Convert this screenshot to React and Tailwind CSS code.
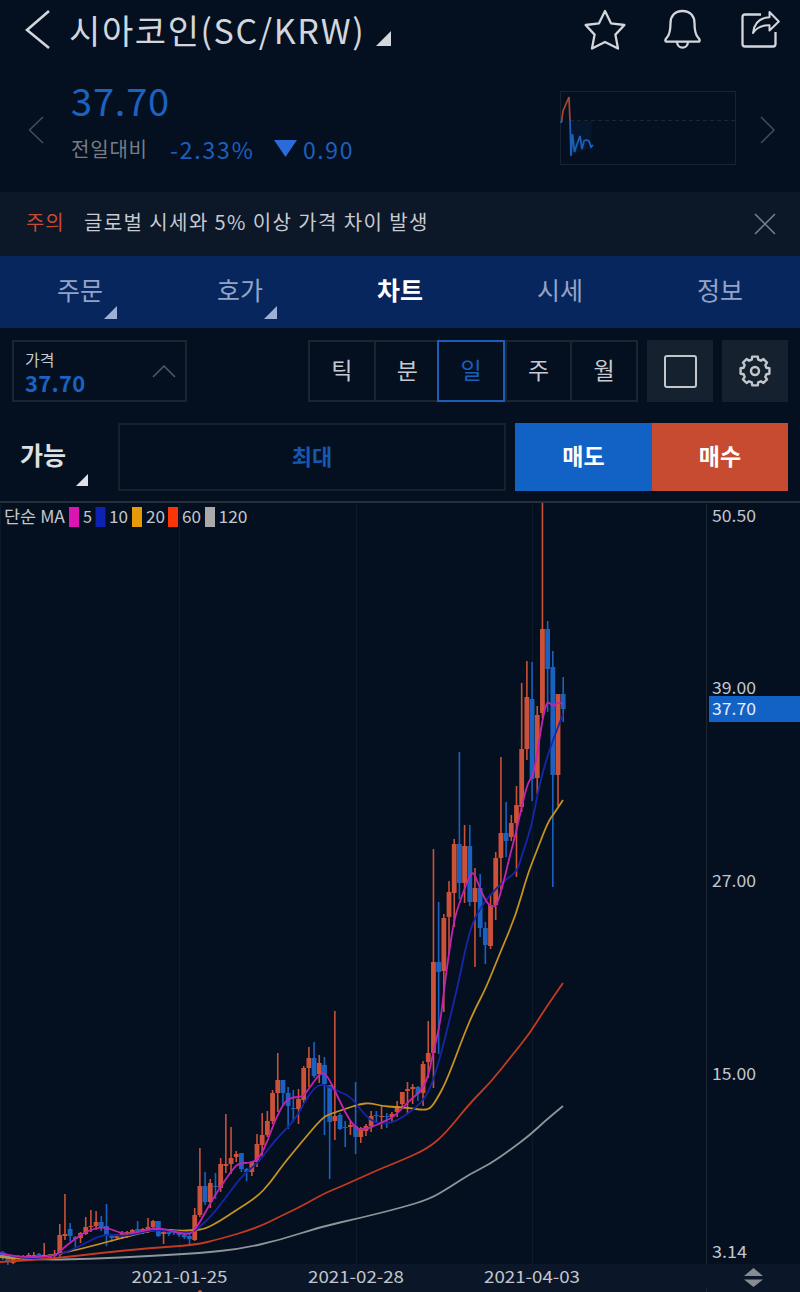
import { useState } from 'react';

const TABS = [
  { label: '주문', menu: true },
  { label: '호가', menu: true },
  { label: '차트' },
  { label: '시세' },
  { label: '정보' },
];

const PERIODS = ['틱', '분', '일', '주', '월'];

// Chart geometry, in px. The plot starts at TOP on the price scale
const TOP = 503;
const LAST_X = 563.2;
const STEP = 5.19;
const UP = '#cb5138';
const DOWN = '#1b61c0';

// Newest first: [up, high, body top, body bottom, low]
const CANDLES = [
  [0, 677, 694, 709, 722], [1, 694, 694, 775, 806], [0, 651, 667, 775, 887], [0, 621, 629, 669, 712],
  [1, 503, 629, 713, 718], [1, 706, 715, 778, 794], [0, 662, 699, 779, 801], [1, 661, 697, 749, 760],
  [1, 683, 749, 807, 812], [1, 786, 805, 823, 877], [1, 815, 823, 837, 841], [0, 802, 833, 841, 857],
  [1, 757, 833, 858, 890], [1, 852, 858, 905, 920], [1, 894, 905, 946, 949], [0, 922, 928, 945, 964],
  [0, 874, 888, 928, 937], [1, 868, 888, 902, 967], [0, 825, 846, 902, 906], [1, 825, 846, 883, 903],
  [0, 752, 844, 883, 899], [1, 839, 844, 893, 927], [1, 881, 892, 917, 955], [1, 914, 918, 971, 1012],
  [0, 902, 962, 972, 1054], [1, 849, 962, 1053, 1088], [1, 1021, 1053, 1062, 1078], [1, 1061, 1064, 1093, 1106],
  [0, 1086, 1087, 1094, 1101], [1, 1084, 1087, 1089, 1104], [1, 1082, 1089, 1091, 1114], [1, 1092, 1092, 1104, 1107],
  [1, 1101, 1106, 1112, 1117], [1, 1112, 1114, 1117, 1122], [0, 1113, 1116, 1117, 1128], [1, 1106, 1116, 1117, 1129],
  [0, 1111, 1115, 1116, 1123], [1, 1111, 1116, 1126, 1132], [1, 1124, 1126, 1131, 1136], [1, 1127, 1128, 1137, 1143],
  [0, 1082, 1126, 1137, 1154], [1, 1121, 1125, 1127, 1135], [0, 1121, 1127, 1128, 1147], [0, 1113, 1115, 1129, 1130],
  [1, 1011, 1116, 1121, 1140], [0, 1085, 1085, 1122, 1179], [0, 1057, 1065, 1084, 1135], [1, 1055, 1063, 1074, 1083],
  [0, 1042, 1058, 1076, 1078], [1, 1047, 1058, 1068, 1087], [1, 1066, 1068, 1100, 1103], [1, 1089, 1099, 1109, 1124],
  [0, 1090, 1108, 1109, 1122], [0, 1087, 1093, 1106, 1129], [0, 1080, 1080, 1093, 1105], [1, 1053, 1080, 1093, 1112],
  [1, 1090, 1093, 1121, 1124], [1, 1111, 1121, 1135, 1137], [1, 1113, 1135, 1145, 1157], [1, 1134, 1144, 1162, 1167],
  [1, 1161, 1162, 1172, 1176], [0, 1168, 1169, 1172, 1181], [0, 1153, 1153, 1169, 1172], [1, 1151, 1154, 1157, 1162],
  [1, 1127, 1158, 1164, 1174], [1, 1114, 1164, 1166, 1173], [1, 1158, 1164, 1188, 1192], [0, 1173, 1186, 1187, 1199],
  [1, 1179, 1183, 1202, 1208], [0, 1172, 1186, 1202, 1205], [1, 1148, 1186, 1215, 1217], [1, 1208, 1215, 1240, 1241],
  [0, 1234, 1236, 1239, 1244], [0, 1234, 1235, 1237, 1239], [0, 1232, 1233, 1235, 1237], [0, 1230, 1231, 1233, 1235],
  [0, 1230, 1232, 1234, 1236], [1, 1230, 1232, 1234, 1244], [0, 1221, 1221, 1236, 1237], [1, 1220, 1221, 1227, 1229],
  [1, 1218, 1227, 1231, 1233], [1, 1228, 1229, 1233, 1234], [0, 1221, 1229, 1233, 1235], [1, 1229, 1230, 1233, 1236],
  [1, 1231, 1232, 1234, 1238], [1, 1231, 1233, 1235, 1239], [1, 1234, 1236, 1238, 1240], [0, 1234, 1236, 1238, 1242],
  [0, 1204, 1226, 1236, 1246], [0, 1216, 1222, 1227, 1231], [1, 1211, 1222, 1226, 1230], [1, 1210, 1226, 1227, 1232],
  [1, 1217, 1227, 1234, 1235], [1, 1232, 1233, 1238, 1243], [0, 1236, 1237, 1239, 1247], [0, 1223, 1229, 1236, 1241],
  [1, 1194, 1234, 1236, 1240], [1, 1224, 1235, 1255, 1257], [1, 1250, 1254, 1256, 1260], [0, 1254, 1255, 1258, 1259],
  [1, 1243, 1255, 1257, 1259], [0, 1253, 1254, 1258, 1260], [1, 1252, 1255, 1257, 1259], [1, 1253, 1255, 1257, 1259],
  [1, 1255, 1256, 1258, 1260], [0, 1255, 1256, 1259, 1260], [1, 1256, 1257, 1263, 1264], [0, 1254, 1255, 1262, 1265],
  [0, 1251, 1252, 1258, 1260],
];

const AVERAGES = [
  {
    color: '#8f9599',
    points: [[0, 1256], [30, 1260], [90, 1259], [150, 1256], [200, 1253], [240, 1249], [280, 1240], [320, 1227], [360, 1218], [400, 1208], [430, 1199], [450, 1187], [470, 1174], [490, 1164], [510, 1150], [530, 1135], [545, 1121], [563, 1106]],
  },
  {
    color: '#c43a20',
    points: [[0, 1262], [50, 1259], [100, 1253], [150, 1248], [195, 1245], [220, 1239], [257, 1228], [285, 1214], [300, 1207], [325, 1193], [340, 1187], [360, 1178], [380, 1169], [400, 1161], [427, 1149], [445, 1134], [470, 1103], [490, 1083], [510, 1058], [530, 1033], [545, 1009], [563, 983]],
  },
  {
    color: '#c8921e',
    points: [[0, 1257], [20, 1260], [60, 1254], [100, 1244], [140, 1233], [160, 1229], [180, 1231], [195, 1230], [205, 1229], [220, 1221], [235, 1211], [257, 1197], [270, 1183], [282, 1166], [300, 1144], [322, 1118], [330, 1114], [345, 1109], [360, 1104], [370, 1103], [382, 1106], [395, 1107], [410, 1108], [422, 1110], [430, 1109], [437, 1099], [447, 1080], [465, 1032], [475, 1009], [486, 988], [500, 953], [516, 915], [527, 876], [537, 850], [548, 822], [553, 815], [563, 800]],
  },
  {
    color: '#1626a8',
    points: [[0, 1252], [20, 1260], [60, 1255], [80, 1246], [105, 1233], [125, 1237], [150, 1230], [175, 1231], [190, 1234], [200, 1227], [215, 1212], [235, 1185], [245, 1173], [258, 1163], [275, 1140], [295, 1120], [305, 1101], [315, 1087], [323, 1084], [335, 1090], [350, 1096], [360, 1109], [370, 1120], [380, 1124], [395, 1122], [410, 1112], [420, 1104], [430, 1090], [440, 1058], [450, 1018], [460, 976], [465, 950], [473, 921], [485, 901], [495, 890], [505, 880], [517, 872], [522, 855], [532, 825], [538, 790], [548, 754], [555, 735], [563, 714]],
  },
  {
    color: '#c423b0',
    points: [[0, 1253], [15, 1257], [55, 1257], [62, 1249], [75, 1239], [85, 1232], [103, 1226], [120, 1233], [130, 1234], [150, 1229], [160, 1228], [175, 1232], [190, 1235], [197, 1227], [205, 1213], [215, 1195], [230, 1173], [238, 1163], [252, 1163], [260, 1157], [268, 1140], [275, 1120], [285, 1101], [293, 1097], [303, 1097], [310, 1087], [321, 1072], [327, 1075], [337, 1095], [345, 1112], [353, 1125], [360, 1130], [370, 1128], [385, 1121], [395, 1116], [410, 1100], [420, 1092], [428, 1078], [433, 1053], [440, 1025], [444, 990], [448, 960], [454, 920], [461, 898], [470, 875], [474, 872], [480, 889], [488, 905], [496, 908], [503, 885], [510, 855], [516, 833], [522, 805], [528, 782], [533, 776], [537, 755], [542, 722], [547, 700], [553, 707], [558, 702], [563, 704]],
  },
];

const LEGEND = [
  { color: '#dc14b4', x: 69, text: '5', textX: 83, width: 9 },
  { color: '#0d22b0', x: 95.5, text: '10', textX: 109, width: 19 },
  { color: '#e59a08', x: 132, text: '20', textX: 146, width: 19 },
  { color: '#fb3507', x: 168, text: '60', textX: 182, width: 19 },
  { color: '#a9a9a9', x: 205, text: '120', textX: 218.5, width: 29 },
];

const PRICES = [
  { y: 516, text: '50.50' },
  { y: 688, text: '39.00' },
  { y: 881, text: '27.00' },
  { y: 1074, text: '15.00' },
];

const DATES = [
  { x: 179.5, text: '2021-01-25' },
  { x: 356, text: '2021-02-28' },
  { x: 532, text: '2021-04-03' },
];

// Smooth line through the midpoints of neighbouring points
function linePath(points) {
  let d = `M${points[0][0]} ${points[0][1]}`;
  for (let i = 1; i < points.length - 1; i++) {
    const [x, y] = points[i];
    const [nx, ny] = points[i + 1];
    d += ` Q${x} ${y} ${(x + nx) / 2} ${(y + ny) / 2}`;
  }
  const [lx, ly] = points[points.length - 1];
  return `${d} L${lx} ${ly}`;
}

function Chevron({ d, className, strokeWidth = 1.5, ...size }) {
  return (
    <svg {...size} className={className} fill="none" stroke="currentColor" strokeWidth={strokeWidth}>
      <path d={d} />
    </svg>
  );
}

function Corner({ size, className }) {
  return (
    <svg width={size} height={size} viewBox="0 0 10 10" className={className} fill="currentColor">
      <path d="M10 0V10H0Z" />
    </svg>
  );
}

function Header() {
  return (
    <header className="flex h-16 items-center pb-1 pl-[25px] pr-5 text-[#d3d6dc]">
      <Chevron width={26} height={40} d="M24 1L2 20L24 38" strokeWidth={2.6} />
      <h1 className="ml-[18px] w-[297px] whitespace-nowrap text-[34px] leading-[56px] tracking-[1.6px]">시아코인(SC/KRW)</h1>
      <Corner size={15} className="mt-[17px] ml-[10px]" />
      <div className="ml-auto flex items-center gap-[39px]">
        {/* Favourite */}
        <svg width="42" height="42" className="overflow-visible" fill="none" stroke="currentColor" strokeWidth="2.3" strokeLinejoin="round">
          <path d="M23 2L29 14.3L42.4 16L33.4 25.6L36 39.5L23 33L10 39.5L12.6 25.6L3.6 16L17 14.3Z" />
        </svg>
        {/* Alarm */}
        <svg width="38" height="42" fill="none" stroke="currentColor" strokeWidth="2.3" strokeLinejoin="round">
          <path d="M19.5 2C11.5 2 7.5 7.5 7.5 14C7.5 23 6.3 26 3.9 28.5C2 30.5 1.5 32.6 4 32.6H35C37.5 32.6 37 30.5 35.1 28.5C32.7 26 31.5 23 31.5 14C31.5 7.5 27.5 2 19.5 2Z" />
          <path d="M14 33C14.5 40.5 24.5 40.5 25 33" />
        </svg>
        {/* Share */}
        <svg width="40" height="40" className="overflow-visible" fill="none" stroke="currentColor" strokeWidth="2.3" strokeLinejoin="round">
          <path d="M21 4.5H5Q2.5 4.5 2.5 7V34Q2.5 36.5 5 36.5H33Q35.5 36.5 35.5 34V22" />
          <path d="M29.5 2L38.8 11.5L29.5 20.5V15.3C21.5 15 16.5 17.5 13 23C14 13.5 20 7.8 29.5 7.2Z" strokeWidth="2" />
        </svg>
      </div>
    </header>
  );
}

function PriceSummary() {
  return (
    <section className="flex h-32 items-center pl-7 pr-6">
      <Chevron width={16} height={28} d="M15 1L1.5 14L15 27" className="mb-[-4px] text-[#454d58]" />
      <div className="ml-[27px] w-[300px]">
        <div className="-mt-3 w-[98px] text-[38px] leading-[40px] tracking-[0.8px] text-[#1b62c2]">37.70</div>
        <div className="mt-[13px] flex h-8 items-center whitespace-nowrap text-[22px] leading-8 text-[#1d5fbd]">
          <span className="w-[99px] text-[20px] tracking-[0.8px] text-[#777d86]">전일대비</span>
          <span className="w-[104px] text-[23px] tracking-[1.8px]">-2.33%</span>
          <svg width="23" height="17" className="mr-[6px]" fill="#2a6bd8">
            <path d="M0 0H23L11.5 17Z" />
          </svg>
          <span className="text-[23px] tracking-[1.6px]">0.90</span>
        </div>
      </div>
      <svg width="176" height="76" className="ml-auto mr-[24px]" fill="none">
        <rect x="0.5" y="1.5" width="175" height="73" stroke="#172330" />
        <path d="M10 30.5H176" stroke="#1a2733" strokeDasharray="4 3" />
        <path d="M10 31H32L31 58L20 62L11 66Z" fill="#06162d" />
        <path d="M1.5 32L3 21L9 7L10 31" stroke="#a94633" strokeWidth="1.7" />
        <path d="M1 33L2 30M10 30L11 66L12.5 44L14.5 62L16 57L20 46L22 59L24 51L26 50L29 51L31 57L33 55" stroke="#1b5fb8" strokeWidth="1.8" />
      </svg>
      <Chevron width={16} height={28} d="M1 1L14 14L1 27" className="mb-[-4px] text-[#454d58]" />
    </section>
  );
}

function Notice({ onClose }) {
  return (
    <section className="flex h-16 items-center bg-[#0c1728] pb-1 pl-[26px] pr-6 text-[20px]">
      <span className="w-[58px] tracking-[0.8px] text-[#c94a33]">주의</span>
      <span className="whitespace-nowrap tracking-[1.4px] text-[#c6cad1]">글로벌 시세와 5% 이상 가격 차이 발생</span>
      <button onClick={onClose} className="ml-auto cursor-pointer text-[#7b828c]" aria-label="닫기">
        <Chevron width={22} height={22} d="M1 1L21 21M21 1L1 21" className="mt-1" />
      </button>
    </section>
  );
}

function Tabs() {
  const [active, setActive] = useState('차트');
  return (
    <nav className="grid h-[72px] grid-cols-5 bg-[#07265d]">
      {TABS.map((tab) => (
        <button
          key={tab.label}
          onClick={() => setActive(tab.label)}
          className={`relative cursor-pointer pb-1 text-[25px] ${active === tab.label ? 'font-bold text-white' : 'text-[#93a3c8]'}`}
        >
          {tab.label}
          {tab.menu && <Corner size={13} className="absolute left-[104px] top-[50px] text-[#9dafd4]" />}
        </button>
      ))}
    </nav>
  );
}

function Toolbar() {
  const [period, setPeriod] = useState('일');
  return (
    <section className="flex h-[85px] px-3 pt-3">
      <div className="flex h-[62px] w-[175px] items-center justify-between border-2 border-[#1b2530] pl-[11px] pr-[9px]">
        <div>
          <div className="text-[16px] leading-[22px] text-[#c6cad1]">가격</div>
          <div className="text-[22px] font-bold leading-[24px] tracking-[0.3px] text-[#1b62c2]">37.70</div>
        </div>
        <Chevron width={24} height={14} d="M1 13L12 2L23 13" className="text-[#525a65]" />
      </div>
      <div className="ml-auto flex h-[62px] w-[330px] border-2 border-[#1b2530]">
        {PERIODS.map((item) => (
          <button
            key={item}
            onClick={() => setPeriod(item)}
            className={`flex-1 cursor-pointer pb-[3px] text-[23px] ${
              item === period
                ? '-my-[2px] -ml-[2px] border-[2.5px] border-[#1c5dba] text-[#1b5fbd]'
                : 'text-[#c6cad1] not-first:border-l-2 not-first:border-[#1b2530]'
            }`}
          >
            {item}
          </button>
        ))}
      </div>
      <button className="ml-[9px] flex h-[62px] w-[66px] cursor-pointer items-center justify-center bg-[#162130]">
        <span className="block h-[33px] w-[33px] rounded-[3px] border-[2.5px] border-[#c3c6cb]" />
      </button>
      <button className="ml-[9px] flex h-[62px] w-[66px] cursor-pointer items-center justify-center bg-[#162130]">
        <svg width="34" height="34" viewBox="-17 -17 34 34" fill="none" stroke="#c3c6cb" strokeWidth="2.4" strokeLinejoin="round">
          <circle r="4" />
          <path d="M-3.2 -11.4L-2.8 -14.4H2.8L3.2 -11.4L5.9 -10.3L8.4 -12L12 -8.4L10.3 -5.9L11.4 -3.2L14.4 -2.8V2.8L11.4 3.2L10.3 5.9L12 8.4L8.4 12L5.9 10.3L3.2 11.4L2.8 14.4H-2.8L-3.2 11.4L-5.9 10.3L-8.4 12L-12 8.4L-10.3 5.9L-11.4 3.2L-14.4 2.8V-2.8L-11.4 -3.2L-10.3 -5.9L-12 -8.4L-8.4 -12L-5.9 -10.3Z" />
        </svg>
      </button>
    </section>
  );
}

function OrderBar() {
  return (
    <section className="flex h-[88px] pl-5 pr-3 pt-[10px] text-[23px] font-bold">
      <div className="flex h-[68px] w-[98px] items-center pb-1 text-[25px] text-[#dde0e4]">
        <span className="w-[56px]">가능</span>
        <Corner size={12} className="mt-[50px]" />
      </div>
      <div className="flex h-[68px] w-[388px] items-center justify-center border-2 border-[#17212c] pb-1 text-[22px] text-[#1558b4]">최대</div>
      <button className="ml-[9px] h-[68px] w-[137px] cursor-pointer bg-[#1262c5] pb-1 text-white">매도</button>
      <button className="h-[68px] w-[136px] cursor-pointer bg-[#c64b31] pb-1 text-white">매수</button>
    </section>
  );
}

function Chart() {
  return (
    <svg width="800" height="791" viewBox="0 501 800 791" className="block" fontSize="17" fill="#c3c7cd">
      {/* Axis bar and grid */}
      <rect y="1264" width="800" height="28" fill="#0b1729" />
      <path d="M0.5 504V1264M179.5 504V1264M356.5 504V1264M532.5 504V1264" stroke="#0c1a29" />
      <path d="M706.5 504V1264M706.5 1288V1292" stroke="#1d2732" />
      <rect y="501" width="800" height="2" fill="#26303b" />

      {CANDLES.map(([up, high, top, bottom, low], i) => {
        const x = LAST_X - i * STEP;
        return (
          <g key={i} fill={up ? UP : DOWN}>
            <rect x={x - 0.8} y={Math.max(high, TOP)} width="1.6" height={low - high} />
            <rect x={x - 2.4} y={top} width="4.8" height={bottom - top} />
          </g>
        );
      })}

      {AVERAGES.map((line) => (
        <path key={line.color} d={linePath(line.points)} fill="none" stroke={line.color} strokeWidth="1.8" />
      ))}

      {/* Moving average legend */}
      <text x="4" y="523" textLength="61" lengthAdjust="spacingAndGlyphs">단순 MA</text>
      {LEGEND.map((item) => (
        <g key={item.text}>
          <rect x={item.x} y="507" width="10" height="20" fill={item.color} />
          <text x={item.textX} y="523" textLength={item.width} lengthAdjust="spacingAndGlyphs">{item.text}</text>
        </g>
      ))}

      {/* Price scale */}
      {PRICES.map((price) => (
        <text key={price.text} x="712" y={price.y + 6} textLength="44" lengthAdjust="spacingAndGlyphs">{price.text}</text>
      ))}
      <text x="712" y="1258" textLength="35" lengthAdjust="spacingAndGlyphs">3.14</text>
      <rect x="709" y="696" width="91" height="26" fill="#1262c5" />
      <text x="712" y="715" textLength="44" lengthAdjust="spacingAndGlyphs" fill="#e8eef8">37.70</text>

      {/* Dates */}
      {DATES.map((date) => (
        <text key={date.text} x={date.x} y="1283" textAnchor="middle" textLength="96" lengthAdjust="spacingAndGlyphs">{date.text}</text>
      ))}
      <path d="M744 1276L753.5 1268L763 1276ZM744 1279.5H763L753.5 1287Z" fill="#878c93" />
      <circle cx="200" cy="1292" r="2" fill="#c45a35" />
    </svg>
  );
}

export default function App() {
  const [showNotice, setShowNotice] = useState(true);
  return (
    <main className="h-[1292px] w-[800px] overflow-hidden bg-[#04101f] font-['Noto_Sans_CJK_KR',sans-serif]">
      <Header />
      <PriceSummary />
      {showNotice && <Notice onClose={() => setShowNotice(false)} />}
      <Tabs />
      <Toolbar />
      <OrderBar />
      <Chart />
    </main>
  );
}
